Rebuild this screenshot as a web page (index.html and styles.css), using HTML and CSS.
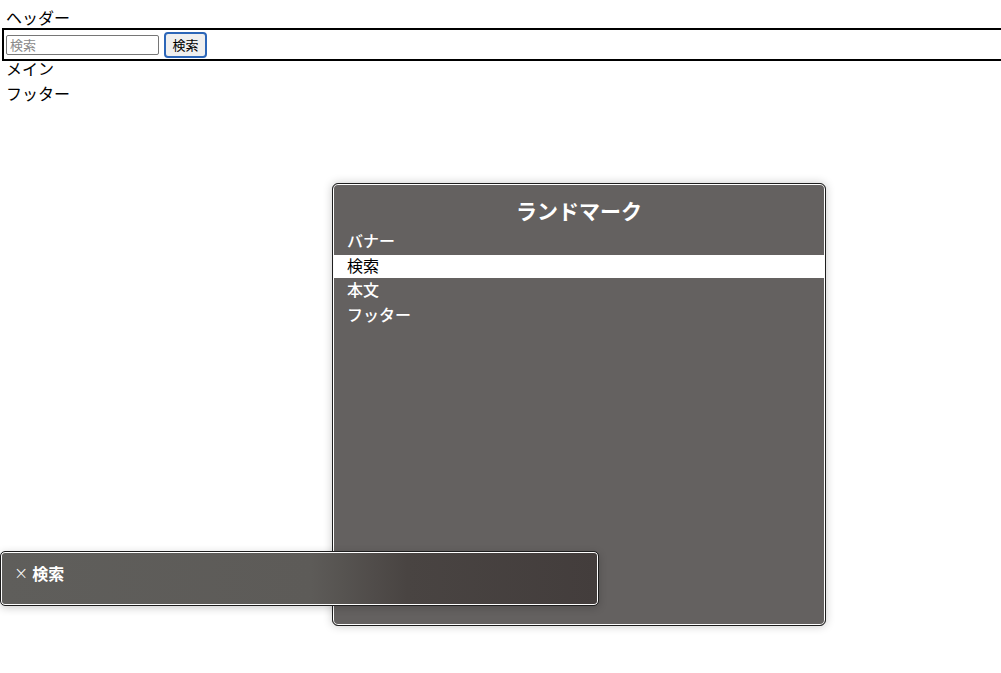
FILE: index.html
```html
<!DOCTYPE html>
<html lang="ja">
<head>
<meta charset="utf-8">
<title>ランドマーク</title>
<link rel="stylesheet" href="styles.css">
</head>
<body>
  <header class="page-header">ヘッダー</header>
  <form class="search" role="search">
    <input class="search-input" type="text" placeholder="検索">
    <button class="search-button" type="button">検索</button>
  </form>
  <main class="page-main">メイン</main>
  <footer class="page-footer">フッター</footer>

  <div class="rotor">
    <div class="rotor-title">ランドマーク</div>
    <ul class="rotor-list">
      <li class="rotor-item">バナー</li>
      <li class="rotor-item is-selected">検索</li>
      <li class="rotor-item">本文</li>
      <li class="rotor-item">フッター</li>
    </ul>
  </div>

  <div class="caption">
    <span class="caption-close">×</span><span class="caption-text">検索</span>
  </div>
</body>
</html>
```
FILE: styles.css
```css
html, body {
  margin: 0;
  padding: 0;
  background: #fff;
}

body {
  width: 1001px;
  height: 673px;
  overflow: hidden;
  position: relative;
  font-family: "Noto Sans CJK JP", "Noto Sans", sans-serif;
  font-size: 16px;
  color: #000;
}

.page-header,
.page-main,
.page-footer {
  line-height: 24px;
  padding-left: 6px;
}

.page-header {
  padding-top: 5px;
  height: 23px;
}

.search {
  display: flex;
  align-items: center;
  gap: 5px;
  margin-left: 2px;
  width: 1010px;
  height: 29px;
  border: 2px solid #000;
  padding: 0 0 0 2px;
  box-sizing: content-box;
}

.search-input {
  width: 153px;
  height: 20px;
  box-sizing: border-box;
  border: 1px solid #767676;
  border-radius: 2px;
  padding: 0 3px;
  font: 13px "Noto Sans CJK JP", sans-serif;
  color: #000;
}

.search-input::placeholder {
  color: #8a8a8a;
}

.search-button {
  width: 43px;
  height: 26px;
  box-sizing: border-box;
  border: 2px solid #2c66b8;
  border-radius: 4px;
  background: #efefef;
  padding: 0;
  font: 13px "Noto Sans CJK JP", sans-serif;
  color: #000;
}

.page-main {
  margin-top: -5px;
}

.page-footer {
  padding-top: 1px;
}

/* landmark rotor panel */
.rotor {
  position: absolute;
  left: 332px;
  top: 183px;
  width: 494px;
  height: 443px;
  box-sizing: border-box;
  border: 1px solid #1e1e1e;
  border-radius: 6px;
  background: #646160;
  box-shadow: inset 0 0 0 1px #fff, 0 0 10px rgba(0, 0, 0, 0.22);
  padding: 1px;
  color: #fff;
}

.rotor-title {
  text-align: center;
  font-size: 21px;
  font-weight: 700;
  line-height: 28px;
  padding-top: 11px;
  height: 34px;
}

.rotor-list {
  list-style: none;
  margin: 0;
  padding: 0;
}

.rotor-item {
  height: 24.5px;
  line-height: 20px;
  padding-left: 13px;
  font-size: 16px;
  font-weight: 500;
}

.rotor-item.is-selected {
  background: #fff;
  color: #000;
  font-weight: 400;
  height: 23.5px;
  margin-bottom: 1px;
  line-height: 21px;
}

/* speech caption panel */
.caption {
  position: absolute;
  left: 0;
  top: 551px;
  width: 599px;
  height: 55px;
  box-sizing: border-box;
  border: 1px solid #1e1e1e;
  border-radius: 5px;
  background: linear-gradient(90deg, #5f5e5b 0%, #5d5b58 52%, #494442 68%, #433d3c 100%);
  box-shadow: inset 0 0 0 1px #fff, 0 2px 8px rgba(0, 0, 0, 0.2);
  padding: 9px 0 0 13px;
  color: #fff;
  display: flex;
  align-items: flex-start;
  gap: 4px;
}

.caption-close {
  font-size: 17px;
  font-weight: 300;
  line-height: 24px;
  font-family: "DejaVu Sans", sans-serif;
}

.caption-text {
  font-size: 16px;
  font-weight: 700;
  line-height: 24px;
}
```
